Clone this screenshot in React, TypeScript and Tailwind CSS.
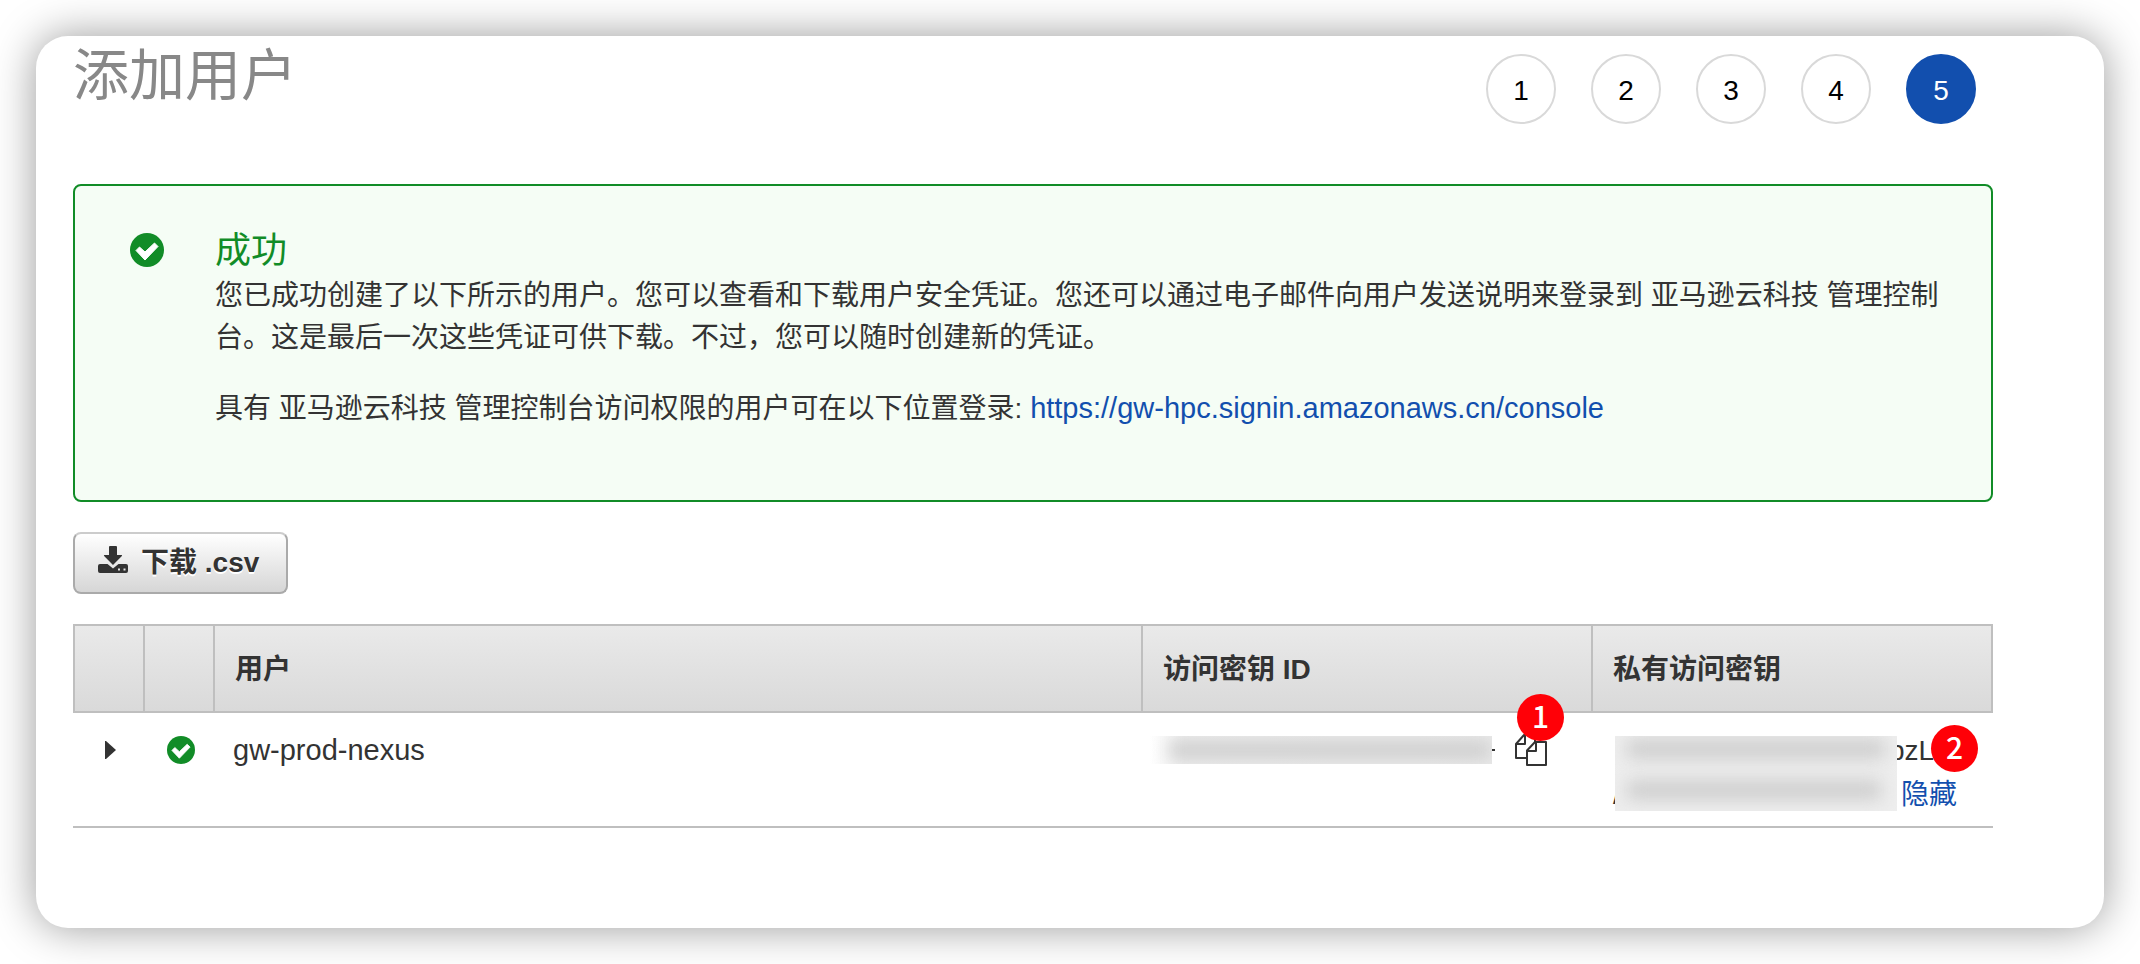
import { clsx } from "clsx";

const STEPS = [1, 2, 3, 4, 5];
const CURRENT_STEP = 5;

type User = { name: string };

const USERS: User[] = [{ name: "gw-prod-nexus" }];

export default function App() {
  return (
    <div className="min-h-screen bg-white p-9 font-['Liberation_Sans','Noto_Sans_CJK_SC',sans-serif] text-[28px] leading-[42px] text-[#333]">
      <main className="min-h-[892px] rounded-[32px] bg-white pl-[37px] pr-[111px] pt-[18px] shadow-[0_0_44px_rgba(0,0,0,0.4)]">
        <header className="flex items-start justify-between pr-[17px]">
          <h1 className="text-[56px] leading-[44px] text-[#888]">添加用户</h1>
          <Steps />
        </header>
        <SuccessAlert />
        <button
          type="button"
          className="mt-[30px] flex h-[62px] items-center gap-[13px] rounded-lg border-2 border-[#aaa] border-t-[#ccc] bg-linear-to-b from-white to-[#d6d6d6] pl-[23px] pr-[27px] font-bold [text-shadow:0_2px_0_#fff]"
        >
          <DownloadIcon />
          <span>下载 .csv</span>
        </button>
        <UserTable />
      </main>
    </div>
  );
}

function Steps() {
  return (
    <ol className="flex gap-[35px]">
      {STEPS.map((step) => (
        <li
          key={step}
          aria-current={step === CURRENT_STEP ? "step" : undefined}
          className={clsx(
            "flex size-[70px] items-center justify-center rounded-full border-2 pt-1",
            step === CURRENT_STEP
              ? "border-[#124fae] bg-[#124fae] text-white"
              : "border-[#d9d9d9] text-black"
          )}
        >
          {step}
        </li>
      ))}
    </ol>
  );
}

function SuccessAlert() {
  return (
    <section className="mt-[60px] flex min-h-[318px] gap-[51px] rounded-lg border-2 border-[#118c27] bg-[#f5fdf5] pl-[55px] pr-[45px] pt-[43px]">
      <CheckIcon className="mt-1 size-[34px] shrink-0" />
      <div>
        <h2 className="mb-[2px] text-[36px] leading-[44px] text-[#118c27]">成功</h2>
        <p>
          您已成功创建了以下所示的用户。您可以查看和下载用户安全凭证。您还可以通过电子邮件向用户发送说明来登录到 亚马逊云科技 管理控制台。这是最后一次这些凭证可供下载。不过，您可以随时创建新的凭证。
        </p>
        <p className="mt-7">
          具有 亚马逊云科技 管理控制台访问权限的用户可在以下位置登录:{" "}
          <a
            href="https://gw-hpc.signin.amazonaws.cn/console"
            className="text-[29px] text-[#124fae]"
          >
            https://gw-hpc.signin.amazonaws.cn/console
          </a>
        </p>
      </div>
    </section>
  );
}

function UserTable() {
  return (
    <table className="mt-[30px] w-full table-fixed border-separate border-spacing-0 text-left">
      <colgroup>
        <col className="w-[72px]" />
        <col className="w-[70px]" />
        <col />
        <col className="w-[450px]" />
        <col className="w-[400px]" />
      </colgroup>
      <thead>
        <tr className="h-[89px] bg-linear-to-b from-[#eaeaea] to-[#d9d9d9]">
          <th className="border-2 border-[#bfbfbf]" />
          <th className="border-2 border-l-0 border-[#bfbfbf]" />
          <th className="border-2 border-l-0 border-[#bfbfbf] px-5 pt-[2px]">用户</th>
          <th className="border-2 border-l-0 border-[#bfbfbf] px-5 pt-[2px]">访问密钥 ID</th>
          <th className="border-2 border-l-0 border-[#bfbfbf] px-5 pt-[2px]">私有访问密钥</th>
        </tr>
      </thead>
      <tbody>
        {USERS.map((user) => (
          <UserRow key={user.name} user={user} />
        ))}
      </tbody>
    </table>
  );
}

function UserRow({ user }: { user: User }) {
  const cell = "border-b-2 border-[#bfbfbf] align-top pt-4";

  return (
    <tr className="h-[115px]">
      <td className={cell}>
        <button type="button" aria-label="展开" className="flex h-[42px] w-full items-center pl-8">
          <svg viewBox="0 0 11 18" className="h-[18px] w-[11px]">
            <path d="M0 0h1l10 9-10 9H0z" fill="#333" />
          </svg>
        </button>
      </td>
      <td className={cell}>
        <div className="flex h-[42px] items-center justify-center pl-[2px]">
          <CheckIcon className="size-7" />
        </div>
      </td>
      <td className={clsx(cell, "pl-[18px] text-[29px]")}>{user.name}</td>
      <td className={clsx(cell, "pl-[7px]")}>
        <div className="flex h-[42px] items-center">
          <span className="flex h-7 w-[342px] items-center overflow-hidden bg-linear-to-r from-white via-[#ededed] via-10% to-[#e9e9e9]">
            <span className="ml-5 h-[18px] w-[320px] bg-[#cfcfcf] blur-[8px]" />
          </span>
          <span className="h-[2px] w-[3px] bg-[#333]" />
          <button type="button" aria-label="复制" className="relative ml-5">
            <CopyIcon />
            <Badge className="-top-10 left-[2px]">1</Badge>
          </button>
        </div>
      </td>
      <td className={clsx(cell, "pl-[22px]")}>
        <div className="relative flex items-start leading-[44px]">
          {/* the masked key runs under the blurred block and shows at its edges */}
          <span className="absolute -left-[2px] top-[44px]">/</span>
          <span className="relative z-10 mt-[7px] flex h-[75px] w-[282px] shrink-0 flex-col justify-between overflow-hidden bg-[#eee] pb-3 pt-1">
            <span className="mx-3 h-[18px] bg-[#cbcbcb] blur-[9px]" />
            <span className="ml-3 mr-4 h-[18px] bg-[#cbcbcb] blur-[9px]" />
          </span>
          <div className="-ml-2 flex flex-col items-start">
            <span>pzL</span>
            <button type="button" className="ml-3 text-[#124fae]">
              隐藏
            </button>
          </div>
          <Badge className="-top-1 left-[316px]">2</Badge>
        </div>
      </td>
    </tr>
  );
}

function Badge({ className, children }: { className: string; children: string }) {
  return (
    <span
      className={clsx(
        "absolute flex size-[47px] items-center justify-center rounded-full bg-[#ff0007] pb-[6px] font-['Noto_Sans_CJK_SC',sans-serif] text-[30px] font-medium text-white",
        className
      )}
    >
      {children}
    </span>
  );
}

function CheckIcon({ className }: { className: string }) {
  return (
    <svg viewBox="0 0 34 34" className={className} aria-hidden="true">
      <circle cx="17" cy="17" r="17" fill="#118c27" />
      <path d="M6 17.500L9.500 14l5.500 5L24.500 10l3.500 3.500L15 27z" fill="#fff" stroke="#fff" strokeLinejoin="round" />
    </svg>
  );
}

function DownloadIcon() {
  return (
    <svg viewBox="0 0 30 27" className="mb-2 h-[27px] w-[30px]" aria-hidden="true">
      <path
        fill="#333"
        d="M12 0h6q1 0 1 1v8h4.500q1 .2.400 1L15 19 6.100 10q-.6-.8.400-1H11V1q0-1 1-1z"
      />
      <path
        fill="#333"
        fillRule="evenodd"
        d="M2 18h7.500L15 22.500 20.500 18H28q2 0 2 2v5q0 2-2 2H2q-2 0-2-2v-5q0-2 2-2zM20 22.500v2h2v-2zM25.500 22.500v2h2v-2z"
      />
    </svg>
  );
}

function CopyIcon() {
  return (
    <svg
      viewBox="0 0 32 32"
      className="h-8 w-8"
      fill="none"
      stroke="#333"
      strokeWidth="2"
      strokeLinejoin="round"
      aria-hidden="true"
    >
      <path d="M12 24H1V10l8-9h11v7M1 10h9V1" />
      <path d="M12 16.500L20 8h11v23H12zM12 17h9V8" />
    </svg>
  );
}
